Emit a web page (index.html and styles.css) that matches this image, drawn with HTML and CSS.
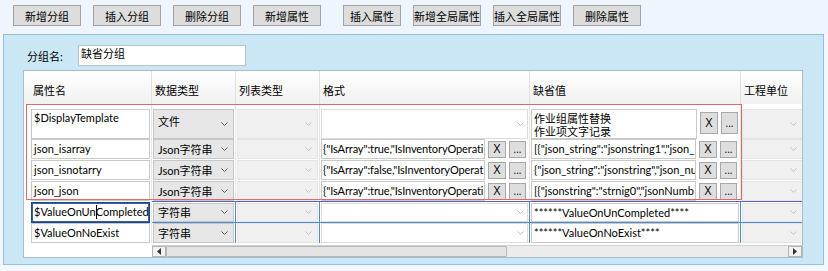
FILE: index.html
```html
<!DOCTYPE html>
<html lang="zh-CN">
<head>
    <meta charset="UTF-8">
    <title>属性分组编辑</title>
    <link rel="stylesheet" href="styles.css">
</head>
<body>
    <div class="toolbar">
        <button class="tb-btn">新增分组</button>
        <button class="tb-btn">插入分组</button>
        <button class="tb-btn">删除分组</button>
        <button class="tb-btn wide-gap">新增属性</button>
        <button class="tb-btn narrow">插入属性</button>
        <button class="tb-btn">新增全局属性</button>
        <button class="tb-btn">插入全局属性</button>
        <button class="tb-btn">删除属性</button>
    </div>

    <div class="panel">
        <div class="group-row">
            <span class="group-label">分组名:</span>
            <div class="group-input">缺省分组</div>
        </div>

        <div class="grid">
            <div class="row head">
                <div class="rh"></div>
                <div class="hc name">属性名</div>
                <div class="hc type">数据类型</div>
                <div class="hc list">列表类型</div>
                <div class="hc fmt">格式</div>
                <div class="hc def">缺省值</div>
                <div class="hc unit">工程单位</div>
            </div>

            <!-- row 1 -->
            <div class="row tall">
                <div class="rh"></div>
                <div class="cell name"><div class="tb">$DisplayTemplate</div></div>
                <div class="cell type"><div class="dd"><span>文件</span><svg class="chev" width="7" height="4" viewBox="0 0 7 4"><path d="M0.5 0.5L3.5 3.5L6.5 0.5" fill="none" stroke="currentColor"/></svg></div></div>
                <div class="cell list"><div class="dd off"><span></span><svg class="chev" width="7" height="4" viewBox="0 0 7 4"><path d="M0.5 0.5L3.5 3.5L6.5 0.5" fill="none" stroke="currentColor"/></svg></div></div>
                <div class="cell fmt"><div class="dd white"><span></span><svg class="chev" width="7" height="4" viewBox="0 0 7 4"><path d="M0.5 0.5L3.5 3.5L6.5 0.5" fill="none" stroke="currentColor"/></svg></div></div>
                <div class="cell def">
                    <div class="tb multi">作业组属性替换<br>作业项文字记录</div>
                    <button class="mini x">X</button>
                    <button class="mini dots">...</button>
                </div>
                <div class="cell unit"><div class="dd off"><span></span><svg class="chev" width="7" height="4" viewBox="0 0 7 4"><path d="M0.5 0.5L3.5 3.5L6.5 0.5" fill="none" stroke="currentColor"/></svg></div></div>
            </div>

            <!-- row 2 -->
            <div class="row">
                <div class="rh"></div>
                <div class="cell name"><div class="tb">json_isarray</div></div>
                <div class="cell type"><div class="dd"><span>Json字符串</span><svg class="chev" width="7" height="4" viewBox="0 0 7 4"><path d="M0.5 0.5L3.5 3.5L6.5 0.5" fill="none" stroke="currentColor"/></svg></div></div>
                <div class="cell list"><div class="dd off"><span></span><svg class="chev" width="7" height="4" viewBox="0 0 7 4"><path d="M0.5 0.5L3.5 3.5L6.5 0.5" fill="none" stroke="currentColor"/></svg></div></div>
                <div class="cell fmt">
                    <div class="tb">{"IsArray":true,"IsInventoryOperati</div>
                    <button class="mini x">X</button>
                    <button class="mini dots">...</button>
                </div>
                <div class="cell def">
                    <div class="tb">[{"json_string":"jsonstring1","json_</div>
                    <button class="mini x">X</button>
                    <button class="mini dots">...</button>
                </div>
                <div class="cell unit"><div class="dd off"><span></span><svg class="chev" width="7" height="4" viewBox="0 0 7 4"><path d="M0.5 0.5L3.5 3.5L6.5 0.5" fill="none" stroke="currentColor"/></svg></div></div>
            </div>

            <!-- row 3 -->
            <div class="row">
                <div class="rh"></div>
                <div class="cell name"><div class="tb">json_isnotarry</div></div>
                <div class="cell type"><div class="dd"><span>Json字符串</span><svg class="chev" width="7" height="4" viewBox="0 0 7 4"><path d="M0.5 0.5L3.5 3.5L6.5 0.5" fill="none" stroke="currentColor"/></svg></div></div>
                <div class="cell list"><div class="dd off"><span></span><svg class="chev" width="7" height="4" viewBox="0 0 7 4"><path d="M0.5 0.5L3.5 3.5L6.5 0.5" fill="none" stroke="currentColor"/></svg></div></div>
                <div class="cell fmt">
                    <div class="tb">{"IsArray":false,"IsInventoryOperat</div>
                    <button class="mini x">X</button>
                    <button class="mini dots">...</button>
                </div>
                <div class="cell def">
                    <div class="tb">{"json_string":"jsonstring","json_nu</div>
                    <button class="mini x">X</button>
                    <button class="mini dots">...</button>
                </div>
                <div class="cell unit"><div class="dd off"><span></span><svg class="chev" width="7" height="4" viewBox="0 0 7 4"><path d="M0.5 0.5L3.5 3.5L6.5 0.5" fill="none" stroke="currentColor"/></svg></div></div>
            </div>

            <!-- row 4 -->
            <div class="row">
                <div class="rh"></div>
                <div class="cell name"><div class="tb">json_json</div></div>
                <div class="cell type"><div class="dd"><span>Json字符串</span><svg class="chev" width="7" height="4" viewBox="0 0 7 4"><path d="M0.5 0.5L3.5 3.5L6.5 0.5" fill="none" stroke="currentColor"/></svg></div></div>
                <div class="cell list"><div class="dd off"><span></span><svg class="chev" width="7" height="4" viewBox="0 0 7 4"><path d="M0.5 0.5L3.5 3.5L6.5 0.5" fill="none" stroke="currentColor"/></svg></div></div>
                <div class="cell fmt">
                    <div class="tb">{"IsArray":true,"IsInventoryOperati</div>
                    <button class="mini x">X</button>
                    <button class="mini dots">...</button>
                </div>
                <div class="cell def">
                    <div class="tb">[{"jsonstring":"strnig0","jsonNumb</div>
                    <button class="mini x">X</button>
                    <button class="mini dots">...</button>
                </div>
                <div class="cell unit"><div class="dd off"><span></span><svg class="chev" width="7" height="4" viewBox="0 0 7 4"><path d="M0.5 0.5L3.5 3.5L6.5 0.5" fill="none" stroke="currentColor"/></svg></div></div>
            </div>

            <!-- row 5 (current) -->
            <div class="row current blue">
                <div class="rh"></div>
                <div class="cell name"><div class="tb focus">$ValueOnUn<span class="caret"></span>Completed</div></div>
                <div class="cell type"><div class="dd"><span>字符串</span><svg class="chev" width="7" height="4" viewBox="0 0 7 4"><path d="M0.5 0.5L3.5 3.5L6.5 0.5" fill="none" stroke="currentColor"/></svg></div></div>
                <div class="cell list"><div class="dd off"><span></span><svg class="chev" width="7" height="4" viewBox="0 0 7 4"><path d="M0.5 0.5L3.5 3.5L6.5 0.5" fill="none" stroke="currentColor"/></svg></div></div>
                <div class="cell fmt"><div class="dd white"><span></span><svg class="chev" width="7" height="4" viewBox="0 0 7 4"><path d="M0.5 0.5L3.5 3.5L6.5 0.5" fill="none" stroke="currentColor"/></svg></div></div>
                <div class="cell def"><div class="tb">******ValueOnUnCompleted****</div></div>
                <div class="cell unit"><div class="dd off"><span></span><svg class="chev" width="7" height="4" viewBox="0 0 7 4"><path d="M0.5 0.5L3.5 3.5L6.5 0.5" fill="none" stroke="currentColor"/></svg></div></div>
            </div>

            <!-- row 6 -->
            <div class="row blue">
                <div class="rh"></div>
                <div class="cell name"><div class="tb">$ValueOnNoExist</div></div>
                <div class="cell type"><div class="dd"><span>字符串</span><svg class="chev" width="7" height="4" viewBox="0 0 7 4"><path d="M0.5 0.5L3.5 3.5L6.5 0.5" fill="none" stroke="currentColor"/></svg></div></div>
                <div class="cell list"><div class="dd off"><span></span><svg class="chev" width="7" height="4" viewBox="0 0 7 4"><path d="M0.5 0.5L3.5 3.5L6.5 0.5" fill="none" stroke="currentColor"/></svg></div></div>
                <div class="cell fmt"><div class="dd white"><span></span><svg class="chev" width="7" height="4" viewBox="0 0 7 4"><path d="M0.5 0.5L3.5 3.5L6.5 0.5" fill="none" stroke="currentColor"/></svg></div></div>
                <div class="cell def"><div class="tb">******ValueOnNoExist****</div></div>
                <div class="cell unit"><div class="dd off"><span></span><svg class="chev" width="7" height="4" viewBox="0 0 7 4"><path d="M0.5 0.5L3.5 3.5L6.5 0.5" fill="none" stroke="currentColor"/></svg></div></div>
            </div>

            <div class="hscroll">
                <div class="frozen"></div>
                <div class="bar">
                    <div class="arrow"><svg width="4" height="7" viewBox="0 0 4 7"><path d="M4 0L0 3.5L4 7Z" fill="#333"/></svg></div>
                    <div class="thumb"></div>
                    <div class="track"></div>
                    <div class="arrow"><svg width="4" height="7" viewBox="0 0 4 7"><path d="M0 0L4 3.5L0 7Z" fill="#333"/></svg></div>
                </div>
            </div>

            <div class="sel-box"></div>
        </div>
    </div>
</body>
</html>
```

FILE: styles.css
```css
body {
    margin: 0;
    background: #f2f8fd;
    font-family: Lato, "Noto Sans CJK SC", sans-serif;
    font-size: 11px;
    color: #000;
}

/* toolbar */
.toolbar {
    display: flex;
    height: 34px;
    box-sizing: border-box;
    padding: 5px 0 0 13px;
    background: #eef5fc;
}
.tb-btn {
    width: 68px;
    height: 21px;
    margin-right: 12px;
    padding: 0;
    border: 1px solid #a2a2a2;
    background: #dddddd;
    font: inherit;
    color: #000;
}
.tb-btn.wide-gap {
    margin-right: 22px;
}
.tb-btn.narrow {
    width: 58px;
}

/* blue panel */
.panel {
    margin: 0 4px 0 3px;
    height: 231px;
    box-sizing: border-box;
    padding: 10px 0 0 19px;
    background: #cbe7f5;
    border: 1px solid #8cc2e3;
}
.group-row {
    display: flex;
    align-items: flex-start;
    height: 25px;
}
.group-label {
    width: 55px;
    padding: 5px 0 0 4px;
    box-sizing: border-box;
    line-height: 14px;
}
.group-input {
    width: 168px;
    height: 21px;
    box-sizing: border-box;
    padding: 0 2px;
    line-height: 15px;
    background: #fff;
    border: 1px solid #b7c4d0;
}

/* grid */
.grid {
    position: relative;
    width: 780px;
    height: 188px;
    box-sizing: border-box;
    border: 1px solid #a9bccd;
    background: #fff;
    overflow: hidden;
}
.row {
    display: grid;
    grid-template-columns: 6px 122px 84px 84px 210px 211px 64px;
    height: 21px;
}
.row.tall {
    height: 34px;
}
.row.head {
    height: 33px;
    background: linear-gradient(#ffffff, #f1f1f1);
}
.hc {
    display: flex;
    align-items: center;
    padding: 4px 0 0 3px;
    border-right: 1px solid #e0e0e0;
    white-space: nowrap;
}
.cell {
    display: flex;
    align-items: center;
    gap: 3px;
    min-width: 0;
    padding: 1px 1px 0 1px;
    box-sizing: border-box;
    border-right: 1px solid #e6e6e6;
}
.row.tall .cell {
    align-items: stretch;
    padding: 5px 1px 1px 1px;
}

/* textbox */
.tb {
    flex: 1;
    min-width: 0;
    height: 20px;
    box-sizing: border-box;
    padding: 1px 1px 0 2px;
    line-height: 16px;
    background: #fff;
    border: 1px solid #c9c9c9;
    white-space: nowrap;
    overflow: hidden;
}
.cell.fmt .tb {
    padding-left: 1px;
    letter-spacing: -0.1px;
}
.row.tall .tb {
    height: auto;
    line-height: 13px;
}
.tb.multi {
    flex: none;
    width: 166px;
    padding-top: 2px;
}
.tb.focus {
    border: 1px solid #1c4780;
    box-shadow: inset 0 0 0 1px #2e63a6;
}
.caret {
    display: inline-block;
    width: 1px;
    height: 14px;
    margin-right: -1px;
    vertical-align: -3px;
    background: #000;
}

/* dropdown */
.dd {
    flex: 1;
    display: flex;
    align-items: center;
    justify-content: space-between;
    height: 20px;
    box-sizing: border-box;
    padding: 0 5px 0 4px;
    background: #e6e6e6;
    border: 1px solid #c6c6c6;
    color: #000;
    white-space: nowrap;
}
.row.tall .dd {
    height: auto;
    align-items: flex-start;
    padding-top: 3px;
}
.row.tall .dd .chev {
    margin-top: 9px;
}
.dd .chev {
    color: #5c5c5c;
    flex: none;
}
.dd.off {
    background: #f0f0f0;
    border-color: #e4e4e4;
}
.dd.off .chev {
    color: #c4c4c4;
}
.dd.white {
    background: #fff;
    border-color: #dcdcdc;
    padding-right: 3px;
}
.dd.white .chev {
    color: #bdbdbd;
}

/* small buttons */
.mini {
    flex: none;
    width: 18px;
    height: 17px;
    padding: 0;
    border: 1px solid #a8a8a8;
    background: #dedede;
    font-family: "Open Sans", sans-serif;
    font-size: 12px;
    line-height: 14px;
    color: #000;
}
.mini.dots {
    width: 17px;
    margin-right: 2px;
    font-size: 10px;
    line-height: 12px;
}
.row.tall .mini {
    height: 22px;
    align-self: center;
    margin-top: -2px;
}

/* current row lines */
.row.blue .cell.type,
.row.blue .cell.list,
.row.blue .cell.fmt,
.row.blue .cell.def {
    border-right-color: #4d8ad0;
}
.row.current .cell.type,
.row.current .cell.list,
.row.current .cell.fmt,
.row.current .cell.def,
.row.current .cell.unit {
    border-top: 1px solid #5a5fc0;
    border-bottom: 1px solid #4d8ad0;
    padding-top: 0;
}
.row.current .cell .tb,
.row.current .cell .dd {
    height: 19px;
}
.row.current .cell.name .tb {
    height: 21px;
}

/* horizontal scrollbar */
.hscroll {
    display: flex;
    margin-top: 2px;
    height: 12px;
}
.frozen {
    width: 128px;
}
.bar {
    flex: 1;
    display: flex;
    background: #ececec;
    border-top: 1px solid #d0d0d0;
}
.arrow {
    width: 14px;
    display: flex;
    align-items: center;
    justify-content: center;
    box-sizing: border-box;
    background: #f2f2f2;
    border: 1px solid #b4b4b4;
}
.thumb {
    width: 341px;
    box-sizing: border-box;
    background: #e4e4e4;
    border: 1px solid #b8b8b8;
    border-radius: 1px;
}
.track {
    flex: 1;
}

/* selection rectangle */
.sel-box {
    position: absolute;
    left: 2px;
    top: 33px;
    width: 716px;
    height: 96px;
    box-sizing: border-box;
    border: 1px solid #e06a6a;
    pointer-events: none;
}
```
